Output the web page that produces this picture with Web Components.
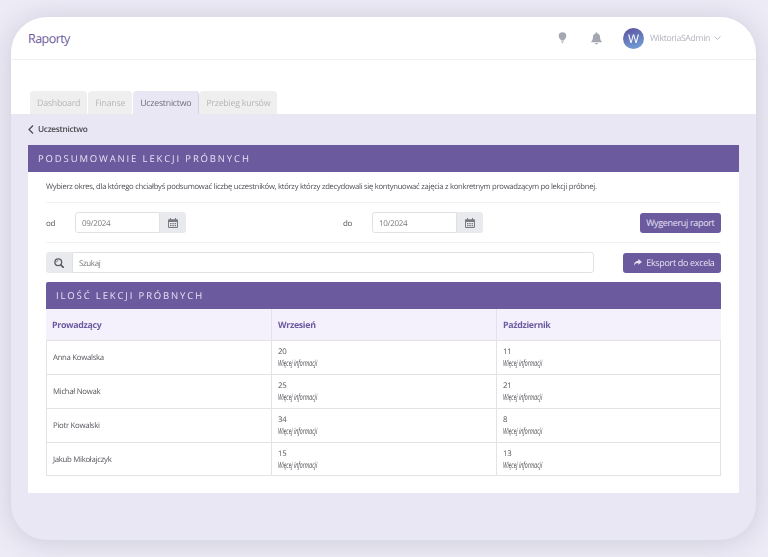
<!DOCTYPE html>
<html lang="pl">
<head>
<meta charset="utf-8">
<title>Raporty</title>
<style>
html, body {
    margin: 0;
    height: 557px;
    overflow: hidden;
    background: #ecebf6;
    font-family: "Open Sans", "Liberation Sans", sans-serif;
    text-rendering: geometricPrecision;
}
</style>
</head>
<body>
<app-window>
    <top-bar slot="top" title-text="Raporty" user="WiktoriaSAdmin"></top-bar>
    <tab-strip slot="top" active="Uczestnictwo"></tab-strip>
    <back-link>Uczestnictwo</back-link>
    <report-panel heading="Podsumowanie lekcji próbnych">
        <report-form></report-form>
        <lessons-table heading="Ilość lekcji próbnych"></lessons-table>
    </report-panel>
</app-window>

<script>
const icons = {
    bulb: `<svg width="9" height="12" viewBox="0 0 11 14"><path fill="currentColor" d="M5.500 0a4.600 4.600 0 0 1 4.600 4.600c0 1.900-1.200 3-2 4-.3.400-.4.700-.5 1H3.400c-.1-.3-.2-.6-.5-1-.8-1-2-2.100-2-4A4.600 4.600 0 0 1 5.500 0zM3.700 10.500h3.600v.9H3.700zM4.300 12.200h2.400L6 13.400H5z"/></svg>`,
    bell: `<svg width="11" height="13" viewBox="0 0 13 15"><path fill="currentColor" d="M6.500 0c.6 0 1 .4 1 1v.6c2 .4 3.200 2 3.200 4.100 0 3.500 1.200 4.400 2.100 5.500.2.300 0 .8-.4.8H.6c-.4 0-.6-.5-.4-.8C1.100 10.100 2.300 9.200 2.300 5.700c0-2.100 1.200-3.700 3.200-4.100V1c0-.6.4-1 1-1zM4.800 12.900h3.400c0 1-.8 1.700-1.700 1.700s-1.700-.7-1.700-1.700z"/></svg>`,
    calendar: `<svg width="10" height="10" viewBox="0 0 10 10"><path fill="currentColor" d="M2 0h1v1.200h4V0h1v1.200h1.100c.5 0 .9.4.9.9v7c0 .5-.4.9-.9.9H.9C.4 10 0 9.600 0 9.100v-7c0-.5.4-.9.9-.9H2zM1 4v5h8V4z"/><path fill="currentColor" d="M2 5h1.500v1.200H2zM4.300 5h1.500v1.200H4.300zM6.600 5h1.500v1.200H6.600zM2 7h1.500v1.200H2zM4.300 7h1.500v1.200H4.300zM6.600 7h1.500v1.200H6.600z"/></svg>`,
    search: `<svg width="10" height="10" viewBox="0 0 11 11"><circle cx="4.700" cy="4.700" r="3.700" fill="none" stroke="currentColor" stroke-width="1.500"/><path d="M2.800 4.700a1.900 1.900 0 0 1 1.900-1.900" fill="none" stroke="currentColor" stroke-width=".8"/><path d="M7.500 7.500l2.700 2.700" stroke="currentColor" stroke-width="1.900" stroke-linecap="round"/></svg>`,
    share: `<svg width="9" height="7" viewBox="0 0 10 8"><path fill="currentColor" d="M6 0l4 3.300L6 6.600V4.700C3.400 4.700 1.900 5.400 1 8 .8 4.300 2.500 2.200 6 2z"/></svg>`
};

class AppWindow extends HTMLElement {
    constructor() {
        super();
        this.attachShadow({ mode: 'open' }).innerHTML = `
<style>
:host {
    display: flex;
    flex-direction: column;
    box-sizing: border-box;
    width: 745px;
    height: 523px;
    margin: 17px 0 0 11px;
    border-radius: 36px;
    overflow: hidden;
    background: #e9e7f3;
    box-shadow: 0 2px 28px rgba(70, 75, 100, .2);
    filter: blur(.35px);
}
.top { background: #fff; }
.body { padding: 0 17px; }
</style>
<div class="top"><slot name="top"></slot></div>
<div class="body"><slot></slot></div>`;
    }
}
customElements.define('app-window', AppWindow);

class TopBar extends HTMLElement {
    constructor() {
        super();
        const user = this.getAttribute('user');
        this.attachShadow({ mode: 'open' }).innerHTML = `
<style>
:host {
    display: flex;
    align-items: center;
    box-sizing: border-box;
    height: 43px;
    padding: 0 35px 0 17px;
    border-bottom: 1px solid #f0f0f3;
    color: #a4a7b1;
}
h1 {
    flex: 1;
    margin: 0;
    font-size: 12.500px;
    font-weight: 500;
    letter-spacing: -.55px;
    color: #6b5b9e;
}
.bulb { margin-right: 24px; display: flex; }
.bell { margin-right: 21px; display: flex; }
.avatar {
    width: 21px;
    height: 21px;
    border-radius: 50%;
    background: linear-gradient(160deg, #5b4f9f, #74a6dc);
    color: #fff;
    font-size: 12px;
    text-align: center;
    line-height: 21px;
    margin-right: 6px;
}
.name { font-size: 8.700px; letter-spacing: -.34px; color: #b3b3bd; }
svg.caret { margin-left: 4px; }
</style>
<h1>${this.getAttribute('title-text')}</h1>
<span class="bulb">${icons.bulb}</span>
<span class="bell">${icons.bell}</span>
<span class="avatar">W</span>
<span class="name">${user}</span>
<svg class="caret" width="7" height="4" viewBox="0 0 7 4"><path d="M.5.5l3 2.800 3-2.800" fill="none" stroke="#b3b3bd" stroke-width=".9"/></svg>`;
    }
}
customElements.define('top-bar', TopBar);

class TabStrip extends HTMLElement {
    constructor() {
        super();
        const active = this.getAttribute('active');
        const tabs = ['Dashboard', 'Finanse', 'Uczestnictwo', 'Przebieg kursów'];
        this.attachShadow({ mode: 'open' }).innerHTML = `
<style>
:host {
    display: flex;
    align-items: flex-end;
    gap: 1px;
    height: 54px;
    padding-left: 19px;
}
span {
    box-sizing: border-box;
    height: 23px;
    line-height: 25px;
    padding: 0 7px;
    border-radius: 4px 4px 0 0;
    background: #efefef;
    color: #b5b5b8;
    font-size: 8.800px;
    letter-spacing: -.24px;
}
span.active {
    background: #e9e7f3;
    color: #6f6f78;
    box-shadow: 1px 0 0 #d6d4e2;
}
</style>
${tabs.map(t => `<span class="${t === active ? 'active' : ''}">${t}</span>`).join('')}`;
    }
}
customElements.define('tab-strip', TabStrip);

class BackLink extends HTMLElement {
    constructor() {
        super();
        this.attachShadow({ mode: 'open' }).innerHTML = `
<style>
:host {
    display: flex;
    align-items: center;
    gap: 4px;
    height: 31px;
    font-size: 8.300px;
    font-weight: 600;
    letter-spacing: -.3px;
    color: #4a4a52;
}
</style>
<svg width="6" height="9" viewBox="0 0 6 9"><path d="M5 .5L1 4.500l4 4" fill="none" stroke="#4a4a52" stroke-width="1.200"/></svg>
<slot></slot>`;
    }
}
customElements.define('back-link', BackLink);

class ReportPanel extends HTMLElement {
    constructor() {
        super();
        this.attachShadow({ mode: 'open' }).innerHTML = `
<style>
:host {
    display: block;
    background: #fff;
    height: 348px;
    width: 711px;
}
h2 {
    margin: 0;
    height: 27px;
    line-height: 28px;
    padding-left: 10px;
    background: #6b5b9e;
    color: #e6e2f2;
    font-size: 9.500px;
    font-weight: 400;
    letter-spacing: 1.860px;
    text-transform: uppercase;
}
.content { padding: 0 18px; }
</style>
<h2>${this.getAttribute('heading')}</h2>
<div class="content"><slot></slot></div>`;
    }
}
customElements.define('report-panel', ReportPanel);

class MonthField extends HTMLElement {
    constructor() {
        super();
        this.attachShadow({ mode: 'open' }).innerHTML = `
<style>
:host {
    display: inline-flex;
    align-items: center;
    font-size: 8px;
    letter-spacing: -.28px;
    color: #55555c;
}
.label { width: 29px; padding-top: 1px; }
.input {
    box-sizing: border-box;
    width: 85px;
    height: 21px;
    line-height: 21px;
    padding-left: 6px;
    border: 1px solid #e1e1e4;
    border-radius: 3px 0 0 3px;
    color: #77777e;
}
.addon {
    display: flex;
    align-items: center;
    justify-content: center;
    width: 26px;
    height: 21px;
    background: #e9eaee;
    border-radius: 0 3px 3px 0;
    color: #777a82;
}
</style>
<span class="label">${this.getAttribute('label')}</span>
<span class="input">${this.getAttribute('value')}</span>
<span class="addon">${icons.calendar}</span>`;
    }
}
customElements.define('month-field', MonthField);

class PurpleButton extends HTMLElement {
    constructor() {
        super();
        this.attachShadow({ mode: 'open' }).innerHTML = `
<style>
:host {
    display: inline-flex;
    align-items: center;
    gap: 4.500px;
    box-sizing: border-box;
    height: 20px;
    padding: 0 6.500px;
    background: #6b5b9e;
    border-radius: 3px;
    color: #e6e2f2;
    font-size: 9px;
    letter-spacing: -.33px;
}
:host([icon]) { padding-left: 9.500px; }
</style>
<slot></slot>`;
    }
}
customElements.define('purple-button', PurpleButton);

class ReportForm extends HTMLElement {
    constructor() {
        super();
        this.attachShadow({ mode: 'open' }).innerHTML = `
<style>
:host { display: block; }
p {
    margin: 0;
    height: 30px;
    line-height: 31px;
    font-size: 7.700px;
    letter-spacing: -.29px;
    color: #4f4f56;
    white-space: nowrap;
    border-bottom: 1px solid #f2f2f4;
}
.dates {
    display: flex;
    align-items: center;
    height: 39px;
    border-bottom: 1px solid #f2f2f4;
}
.dates month-field:nth-child(2) { margin-left: 157px; }
.dates purple-button { margin-left: auto; }
.search {
    display: flex;
    align-items: center;
    height: 39px;
}
.box {
    display: flex;
    width: 548px;
    height: 21px;
    margin-right: auto;
}
.addon {
    display: flex;
    align-items: center;
    justify-content: center;
    width: 26px;
    background: #e9eaee;
    border-radius: 3px 0 0 3px;
    color: #5c5e66;
}
.input {
    flex: 1;
    box-sizing: border-box;
    padding-left: 6px;
    line-height: 21px;
    border: 1px solid #e1e1e4;
    border-radius: 0 3px 3px 0;
    font-size: 8px;
    letter-spacing: -.4px;
    color: #77777e;
}
</style>
<p>Wybierz okres, dla którego chciałbyś podsumować liczbę uczestników, którzy którzy zdecydowali się kontynuować zajęcia z konkretnym prowadzącym po lekcji próbnej.</p>
<div class="dates">
    <month-field label="od" value="09/2024"></month-field>
    <month-field label="do" value="10/2024"></month-field>
    <purple-button>Wygeneruj raport</purple-button>
</div>
<div class="search">
    <div class="box"><span class="addon">${icons.search}</span><span class="input">Szukaj</span></div>
    <purple-button icon>${icons.share}<span>Eksport do excela</span></purple-button>
</div>`;
    }
}
customElements.define('report-form', ReportForm);

const lessonRows = [
    ['Anna Kowalska', 20, 11],
    ['Michał Nowak', 25, 21],
    ['Piotr Kowalski', 34, 8],
    ['Jakub Mikołajczyk', 15, 13]
];

class LessonsTable extends HTMLElement {
    constructor() {
        super();
        const count = n => `<div class="cell"><div class="n">${n}</div><div class="more"><span>Więcej informacji</span></div></div>`;
        this.attachShadow({ mode: 'open' }).innerHTML = `
<style>
:host { display: block; }
h3 {
    margin: 0;
    height: 27px;
    line-height: 28px;
    padding-left: 10px;
    background: #6b5b9e;
    border-radius: 2px 2px 0 0;
    color: #e6e2f2;
    font-size: 9.500px;
    font-weight: 400;
    letter-spacing: 1.860px;
    text-transform: uppercase;
}
.grid {
    display: grid;
    grid-template-columns: 225px 225px 225px;
    grid-template-rows: 31px 34px 34px 34px 33px;
    border-bottom: 1px solid #e3e3e6;
}
.head {
    display: flex;
    align-items: center;
    padding: 1px 0 0 6px;
    background: #f4f1fd;
    border-left: 1px solid #e4e2ee;
    color: #6b5b9e;
    font-size: 8.800px;
    font-weight: 700;
    letter-spacing: -.3px;
}
.head:first-child { border-left: 0; }
.cell {
    box-sizing: border-box;
    border-left: 1px solid #e3e3e6;
    border-top: 1px solid #e3e3e6;
    padding: 6px 0 0 6px;
    font-size: 7.800px;
    letter-spacing: -.3px;
    color: #55555c;
}
.cell:nth-child(3n) { border-right: 1px solid #e3e3e6; }
.name {
    display: flex;
    align-items: center;
    padding-top: 1px;
}
.n { line-height: 11px; }
.more { line-height: 11px; }
.more span {
    display: inline-block;
    font-size: 8.500px;
    font-style: italic;
    letter-spacing: 0;
    color: #47474e;
    transform: scaleX(.61);
    transform-origin: left;
    white-space: nowrap;
}
</style>
<h3>${this.getAttribute('heading')}</h3>
<div class="grid">
    <div class="head">Prowadzący</div><div class="head">Wrzesień</div><div class="head">Październik</div>
    ${lessonRows.map(r => `<div class="cell name">${r[0]}</div>${count(r[1])}${count(r[2])}`).join('')}
</div>`;
    }
}
customElements.define('lessons-table', LessonsTable);
</script>
</body>
</html>
